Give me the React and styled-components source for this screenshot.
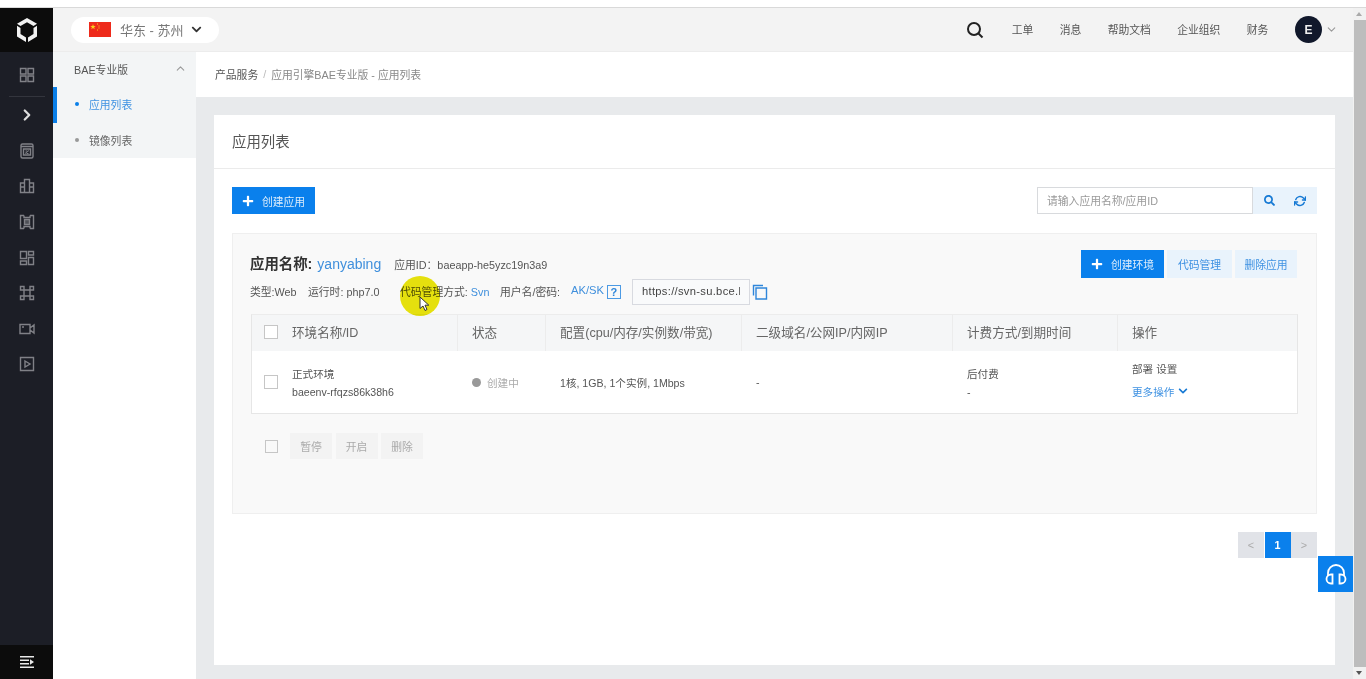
import React from 'react';
import styled, { createGlobalStyle } from 'styled-components';
import { FaSearch, FaPlus, FaChevronDown } from 'react-icons/fa';
import { FiChevronDown, FiChevronUp, FiChevronRight, FiRefreshCw } from 'react-icons/fi';

const GlobalStyle = createGlobalStyle`
  html, body {
    margin: 0;
    height: 100%;
    overflow: hidden;
    background: #fff;
  }
  body {
    font-family: "Liberation Sans", "Noto Sans CJK SC", Arial, sans-serif;
    font-size: 10.8px;
    color: #555;
  }
  * { box-sizing: border-box; }
`;

const Page = styled.div`
  position: relative;
  width: 1366px;
  height: 679px;
  display: flex;
  flex-direction: column;
  overflow: hidden;
`;
const TopStrip = styled.div`
  height: 8px;
  flex: none;
  background: #fff;
  border-bottom: 1px solid #d9d9d9;
`;
const Shell = styled.div`
  flex: 1;
  display: flex;
  min-height: 0;
`;

/* left icon rail */
const Rail = styled.aside`
  width: 53px;
  flex: none;
  background: #1c1e26;
  display: flex;
  flex-direction: column;
  align-items: center;
`;
const RailLogo = styled.div`
  width: 100%;
  height: 44px;
  flex: none;
  background: #0c0c0c;
  display: flex;
  align-items: center;
  justify-content: center;
`;
const RailItem = styled.div`
  width: 100%;
  height: ${(p) => p.$h || 36}px;
  flex: none;
  display: flex;
  align-items: center;
  justify-content: center;
  color: ${(p) => p.$color || '#808187'};
`;
const RailDivider = styled.div`
  width: 36px;
  height: 1px;
  flex: none;
  margin-top: 3px;
  background: #33353d;
`;
const RailTop = styled.div`
  width: 100%;
  padding-top: 5px;
`;
const RailFooter = styled.div`
  margin-top: auto;
  width: 100%;
  height: 34px;
  flex: none;
  background: #0c0c0c;
  display: flex;
  align-items: center;
  justify-content: center;
`;

const Content = styled.div`
  flex: 1;
  min-width: 0;
  display: flex;
  flex-direction: column;
`;

/* top bar */
const TopBar = styled.header`
  height: 44px;
  flex: none;
  background: #f3f3f3;
  border-bottom: 1px solid #ececec;
  display: flex;
  align-items: center;
  padding: 0 0 0 18px;
`;
const Region = styled.div`
  width: 148px;
  height: 26px;
  border-radius: 13px;
  background: #fff;
  display: flex;
  align-items: center;
  padding: 0 0 1px 18px;
  font-size: 13px;
  color: #777;
  svg.flag { margin-right: 9px; }
  svg.arrow { margin-left: 7px; color: #333; }
`;
const TopSearch = styled.div`
  margin-left: auto;
  margin-right: 28px;
  display: flex;
  color: #222;
`;
const TopLink = styled.span`
  margin-right: ${(p) => p.$gap}px;
  padding-bottom: 2px;
  color: #555;
`;
const Avatar = styled.div`
  width: 27px;
  height: 27px;
  border-radius: 50%;
  background: #11182b;
  color: #eee;
  font-size: 12px;
  font-weight: 700;
  display: flex;
  align-items: center;
  justify-content: center;
`;
const AvatarArrow = styled.div`
  display: flex;
  margin: 0 15px 0 3px;
  color: #999;
`;

const Below = styled.div`
  flex: 1;
  display: flex;
  min-height: 0;
`;

/* secondary nav */
const SubNav = styled.nav`
  width: 143px;
  flex: none;
  background: #fff;
`;
const SubNavBlock = styled.div`
  background: #f3f5f6;
  height: 106px;
`;
const SubNavHead = styled.div`
  height: 35px;
  display: flex;
  align-items: center;
  justify-content: space-between;
  padding: 0 9px 2px 21px;
  color: #555;
  svg { color: #999; }
`;
const SubNavItem = styled.div`
  height: 36px;
  display: flex;
  align-items: center;
  padding-left: ${(p) => (p.$active ? 18 : 22)}px;
  padding-bottom: 2px;
  border-left: ${(p) => (p.$active ? '4px solid #0a7fe8' : 'none')};
  color: ${(p) => (p.$active ? '#3f92e2' : '#666')};
`;
const Dot = styled.span`
  width: 4px;
  height: 4px;
  border-radius: 50%;
  margin-right: 10px;
  background: ${(p) => (p.$active ? '#0a7fe8' : '#999')};
`;

/* main area */
const Main = styled.main`
  position: relative;
  flex: 1;
  min-width: 0;
  background: #e8eaec;
  display: flex;
  flex-direction: column;
`;
const Breadcrumb = styled.div`
  height: 45px;
  flex: none;
  background: #fff;
  display: flex;
  align-items: center;
  padding: 0 0 2px 19px;
  color: #888;
  b { font-weight: 400; color: #555; }
  i { font-style: normal; margin: 0 5px; color: #bbb; }
`;
const Card = styled.section`
  flex: 1;
  margin: 18px 18px 14px;
  background: #fff;
  padding: 0 18px;
`;
const CardTitle = styled.h2`
  margin: 0 -18px;
  height: 54px;
  padding: 0 0 2px 18px;
  display: flex;
  align-items: center;
  border-bottom: 1px solid #ebebeb;
  font-size: 14.4px;
  font-weight: 400;
  color: #555;
`;
const Toolbar = styled.div`
  margin-top: 18px;
  display: flex;
  justify-content: space-between;
`;
const PrimaryButton = styled.button`
  width: 83px;
  height: ${(p) => p.$h || 27}px;
  padding: 0;
  border: none;
  background: #0a80ec;
  color: #dcecfb;
  font-family: inherit;
  font-size: 10.8px;
  display: flex;
  align-items: center;
  justify-content: center;
  gap: 8px;
  svg { color: #fff; }
`;
const SearchGroup = styled.div`
  display: flex;
  height: 27px;
`;
const SearchInput = styled.div`
  width: 216px;
  border: 1px solid #d8dadd;
  padding: 0 0 2px 9px;
  display: flex;
  align-items: center;
  color: #999;
`;
const SearchActions = styled.div`
  width: 64px;
  background: #e9f3fc;
  color: #1679d4;
  display: flex;
  align-items: center;
  justify-content: space-around;
  padding: 0 2px;
`;

/* app panel */
const Panel = styled.div`
  margin-top: 19px;
  height: 281px;
  background: #f9f9f9;
  border: 1px solid #efefef;
  padding: 16px 17px;
`;
const PanelHead = styled.div`
  height: 28px;
  display: flex;
  align-items: center;
  justify-content: space-between;
`;
const NameLine = styled.div`
  display: flex;
  align-items: baseline;
  padding-bottom: 3px;
  strong { font-size: 14.4px; color: #333; }
`;
const AppName = styled.span`
  margin: 0 13px 0 5px;
  font-size: 14px;
  color: #3f8fdc;
`;
const HeadActions = styled.div`
  display: flex;
  gap: 3px;
  margin-right: 2px;
`;
const SoftButton = styled.button`
  width: ${(p) => p.$w}px;
  height: 28px;
  padding: 0 0 1px;
  border: none;
  background: #e9f3fc;
  color: #3f92e2;
  font-family: inherit;
  font-size: 10.8px;
`;
const InfoRow = styled.div`
  height: 26px;
  margin-top: 1px;
  display: flex;
  align-items: center;
`;
const Meta = styled.span`
  width: ${(p) => p.$w}px;
  flex: none;
  white-space: nowrap;
  padding-bottom: 3px;
  a { color: #3f8fdc; }
`;
const AkLink = styled.span`
  font-size: 11.2px;
  color: #3f8fdc;
  margin: -4px 3px 0 0;
`;
const HelpBox = styled.span`
  width: 14px;
  height: 14px;
  margin-right: 11px;
  border: 1px solid #4c9ae4;
  color: #2f86da;
  font-size: 11px;
  font-weight: 700;
  display: flex;
  align-items: center;
  justify-content: center;
`;
const UrlBox = styled.div`
  width: 118px;
  height: 26px;
  padding: 0 9px;
  background: #f9fafb;
  border: 1px solid #d8dae0;
`;
const UrlText = styled.div`
  color: #444;
  font-size: 11.2px;
  letter-spacing: 0.3px;
  line-height: 23px;
  overflow: hidden;
  white-space: nowrap;
`;
const CopyIcon = styled.span`
  display: flex;
  margin-left: 2px;
  color: #2f86da;
`;

/* table */
const Table = styled.div`
  margin: 9px 1px 0;
  border: 1px solid #e6e6e6;
  border-top-color: #ececec;
`;
const TableRow = styled.div`
  display: grid;
  grid-template-columns: 206px 88px 196px 211px 165px 179px;
  height: ${(p) => p.$h}px;
  background: ${(p) => p.$bg};
`;
const HeadCell = styled.div`
  display: flex;
  align-items: center;
  padding: 0 0 3px ${(p) => (p.$first ? 12 : 14)}px;
  border-right: ${(p) => (p.$last ? 'none' : '1px solid #ececec')};
  font-size: 12.6px;
  color: #666;
`;
const Cell = styled.div`
  display: flex;
  align-items: center;
  padding-left: ${(p) => (p.$first ? 12 : 14)}px;
  font-size: 10.6px;
  color: #555;
`;
const StackCell = styled.div`
  display: flex;
  flex-direction: column;
  align-items: flex-start;
  justify-content: center;
  gap: ${(p) => p.$gap}px;
  padding: 0 0 ${(p) => p.$lift || 0}px ${(p) => p.$pad}px;
  font-size: 10.6px;
  color: #555;
`;
const Check = styled.span`
  width: 14px;
  height: 14px;
  flex: none;
  margin-right: 14px;
  background: #fff;
  border: 1px solid #c6c6c6;
`;
const Status = styled.span`
  display: flex;
  align-items: center;
  gap: 6px;
  color: #aaa;
  &::before {
    content: '';
    width: 9px;
    height: 9px;
    border-radius: 50%;
    background: #999;
  }
`;
const MoreLink = styled.span`
  display: flex;
  align-items: center;
  gap: 4px;
  color: #3f92e2;
  svg { color: #1679d4; }
`;
const Bulk = styled.div`
  margin-top: 19px;
  display: flex;
  align-items: center;
  padding-left: 15px;
`;
const BulkCheck = styled(Check)`
  width: 13px;
  height: 13px;
  margin-right: 12px;
  background: none;
`;
const BulkButton = styled.span`
  width: 42px;
  height: 26px;
  margin-right: 3.5px;
  background: #f3f3f3;
  color: #aaa;
  display: flex;
  align-items: center;
  justify-content: center;
`;

/* pagination */
const Pager = styled.div`
  margin-top: 18px;
  display: flex;
  justify-content: flex-end;
`;
const PageCell = styled.span`
  width: 26px;
  height: 26px;
  margin-left: ${(p) => (p.$first ? 0 : 0.5)}px;
  display: flex;
  align-items: center;
  justify-content: center;
  background: ${(p) => (p.$active ? '#0a80ec' : '#e1e3e8')};
  color: ${(p) => (p.$active ? '#fff' : '#aaa')};
  font-weight: ${(p) => (p.$active ? 700 : 400)};
`;
const HelpFloat = styled.div`
  position: absolute;
  right: 0;
  top: 504px;
  width: 35px;
  height: 36px;
  background: #0a80ec;
  display: flex;
  align-items: center;
  justify-content: center;
`;

/* scrollbar */
const ScrollBar = styled.div`
  width: 13px;
  flex: none;
  position: relative;
  background: #f1f1f1;
`;
const ScrollArrow = styled.span`
  position: absolute;
  left: 3px;
  ${(p) => (p.$up ? 'top: 4px;' : 'bottom: 4px;')}
  border-left: 3.5px solid transparent;
  border-right: 3.5px solid transparent;
  ${(p) => (p.$up ? 'border-bottom: 4px solid #aaa;' : 'border-top: 4px solid #555;')}
`;
const ScrollThumb = styled.div`
  position: absolute;
  left: 1px;
  right: 0;
  top: 12px;
  bottom: 12px;
  background: #bdbdbd;
`;

/* recorded mouse pointer */
const PointerHalo = styled.div`
  position: absolute;
  left: 400px;
  top: 276px;
  width: 40px;
  height: 40px;
  border-radius: 50%;
  background: #ebe60e;
  mix-blend-mode: multiply;
`;
const Pointer = styled.svg`
  position: absolute;
  left: 419px;
  top: 296px;
`;

const Stroke = ({ children, size = 18 }) => (
  <svg width={size} height={size} viewBox="0 0 18 18" fill="none" stroke="currentColor" strokeWidth="1.4">
    {children}
  </svg>
);

const railIcons = [
  <Stroke key="store">
    <path d="M3 3.5A1.500 1.500 0 0 1 4.500 2h9A1.500 1.500 0 0 1 15 3.500v11a1.500 1.500 0 0 1-1.500 1.500h-9A1.500 1.500 0 0 1 3 14.500z" />
    <path d="M3 4.500h12M5.500 7h7v6h-7z" />
    <path d="M7 11.500l4-3M7.500 9h2M8.500 11.500h2" strokeWidth="1" />
  </Stroke>,
  <Stroke key="building">
    <path d="M6.500 15.500V2.500h5v13M6.500 6H2.500v9.500h13V6h-4M2.500 10h4M11.500 10h4" />
  </Stroke>,
  <Stroke key="bracket">
    <path d="M6 2.500H2.500v13H6M12 2.500h3.500v13H12M6 2.500v2h6v-2M6 15.500v-2h6v2" />
    <path d="M6.500 6.500h5v5h-5z" fill="currentColor" fillOpacity=".5" />
  </Stroke>,
  <Stroke key="layout">
    <path d="M2.500 2.500h6v7h-6zM2.500 12h6v3.500h-6zM10.500 2.500h5V6h-5zM10.500 8.500h5v7h-5z" />
  </Stroke>,
  <Stroke key="nodes">
    <path d="M6 6h6v6H6zM2.500 2.500H6V6H2.500zM12 2.500h3.500V6H12zM2.500 12H6v3.500H2.500zM12 12h3.500v3.500H12z" />
  </Stroke>,
  <Stroke key="video">
    <path d="M2 4.500h10v9H2zM12 8l4-3v8l-4-3" />
    <path d="M4 7h2" strokeWidth="1.600" />
  </Stroke>,
  <Stroke key="play">
    <path d="M2.500 2.500h13v13h-13zM7 6l5 3-5 3z" />
  </Stroke>,
];

const Flag = () => (
  <svg className="flag" width="22" height="15" viewBox="0 0 22 15">
    <rect width="22" height="15" fill="#ee2a1b" />
    <path d="M4 2l.7 2h2l-1.600 1.200.6 2L4 6l-1.700 1.200.6-2L1.300 4h2z" fill="#f7d21d" />
    <path d="M8 1.500h1v1H8zM9.500 3.500h1v1h-1zM9.500 5.500h1v1h-1zM8 7.500h1v1H8z" fill="#f7d21d" />
  </svg>
);

const columns = ['状态', '配置(cpu/内存/实例数/带宽)', '二级域名/公网IP/内网IP', '计费方式/到期时间'];

const App = () => (
  <Page>
    <GlobalStyle />
    <TopStrip />
    <Shell>
      <Rail>
        <RailLogo>
          <svg width="20" height="24" viewBox="0 0 20 24" fill="#f2f2f2">
            <path d="M10 0l10 5.800-3.500 2.200L10 4.200 3.500 8 0 5.800z" />
            <path d="M0 7.800l3.500 2.200v6L9 19.500V24L0 18.500z" />
            <path d="M20 7.800L16.500 10v6L11 19.500V24l9-5.500z" />
          </svg>
        </RailLogo>
        <RailTop>
          <RailItem>
            <Stroke>
              <path d="M2.500 2.500h5.500V8H2.500zM10 2.500h5.500V8H10zM2.500 10H8v5.500H2.500zM10 10h5.500v5.500H10z" />
            </Stroke>
          </RailItem>
        </RailTop>
        <RailDivider />
        <RailItem $color="#ddd">
          <FiChevronRight size={18} strokeWidth={3} />
        </RailItem>
        {railIcons.map((icon) => (
          <RailItem key={icon.key} $h={35.6}>{icon}</RailItem>
        ))}
        <RailFooter>
          <svg width="14" height="12" viewBox="0 0 14 12" fill="#e8e8e8">
            <path d="M0 0h14v1.500H0zM0 3.500h9V5H0zM0 7h9v1.500H0zM0 10.500h14V12H0zM10 3.300l4 2.700-4 2.700z" />
          </svg>
        </RailFooter>
      </Rail>
      <Content>
        <TopBar>
          <Region>
            <Flag />
            华东 - 苏州
            <FaChevronDown className="arrow" size={11} />
          </Region>
          <TopSearch>
            <svg width="18" height="18" viewBox="0 0 18 18" fill="none" stroke="currentColor" strokeWidth="2">
              <circle cx="8" cy="8" r="6" />
              <path d="M12.500 12.500L16.500 16.500" />
            </svg>
          </TopSearch>
          <TopLink $gap={26.4}>工单</TopLink>
          <TopLink $gap={26.4}>消息</TopLink>
          <TopLink $gap={26.4}>帮助文档</TopLink>
          <TopLink $gap={26.4}>企业组织</TopLink>
          <TopLink $gap={26.6}>财务</TopLink>
          <Avatar>E</Avatar>
          <AvatarArrow><FiChevronDown size={13} /></AvatarArrow>
        </TopBar>
        <Below>
          <SubNav>
            <SubNavBlock>
              <SubNavHead>
                BAE专业版
                <FiChevronUp size={13} />
              </SubNavHead>
              <SubNavItem $active><Dot $active />应用列表</SubNavItem>
              <SubNavItem><Dot />镜像列表</SubNavItem>
            </SubNavBlock>
          </SubNav>
          <Main>
            <Breadcrumb>
              <b>产品服务</b><i>/</i>应用引擎BAE专业版 - 应用列表
            </Breadcrumb>
            <Card>
              <CardTitle>应用列表</CardTitle>
              <Toolbar>
                <PrimaryButton><FaPlus size={12} />创建应用</PrimaryButton>
                <SearchGroup>
                  <SearchInput>请输入应用名称/应用ID</SearchInput>
                  <SearchActions>
                    <FaSearch size={11} />
                    <FiRefreshCw size={12} strokeWidth={3} />
                  </SearchActions>
                </SearchGroup>
              </Toolbar>
              <Panel>
                <PanelHead>
                  <NameLine>
                    <strong>应用名称:</strong>
                    <AppName>yanyabing</AppName>
                    应用ID：baeapp-he5yzc19n3a9
                  </NameLine>
                  <HeadActions>
                    <PrimaryButton $h={28}><FaPlus size={12} />创建环境</PrimaryButton>
                    <SoftButton $w={65}>代码管理</SoftButton>
                    <SoftButton $w={62}>删除应用</SoftButton>
                  </HeadActions>
                </PanelHead>
                <InfoRow>
                  <Meta $w={58}>类型:Web</Meta>
                  <Meta $w={92}>运行时: php7.0</Meta>
                  <Meta $w={100}>代码管理方式: <a>Svn</a></Meta>
                  <Meta $w={71}>用户名/密码:</Meta>
                  <AkLink>AK/SK</AkLink>
                  <HelpBox>?</HelpBox>
                  <UrlBox><UrlText>https://svn-su.bce.bj.baidubce.com</UrlText></UrlBox>
                  <CopyIcon>
                    <svg width="16" height="16" viewBox="0 0 16 16" fill="none" stroke="currentColor" strokeWidth="1.400">
                      <path d="M1.500 11.500V1.500H11" />
                      <path d="M4 4h10.500v11H4z" />
                    </svg>
                  </CopyIcon>
                </InfoRow>
                <Table>
                  <TableRow $h={36} $bg="#f5f6f7">
                    <HeadCell $first><Check />环境名称/ID</HeadCell>
                    {columns.map((c) => <HeadCell key={c}>{c}</HeadCell>)}
                    <HeadCell $last>操作</HeadCell>
                  </TableRow>
                  <TableRow $h={62} $bg="#fff">
                    <Cell $first>
                      <Check />
                      <StackCell $gap={5} $pad={0}>
                        <span>正式环境</span>
                        <span>baeenv-rfqzs86k38h6</span>
                      </StackCell>
                    </Cell>
                    <Cell><Status>创建中</Status></Cell>
                    <Cell>1核, 1GB, 1个实例, 1Mbps</Cell>
                    <Cell>-</Cell>
                    <StackCell $gap={5} $pad={14}><span>后付费</span><span>-</span></StackCell>
                    <StackCell $gap={8} $pad={14} $lift={5}>
                      <span>部署 设置</span>
                      <MoreLink>更多操作<FaChevronDown size={10} /></MoreLink>
                    </StackCell>
                  </TableRow>
                </Table>
                <Bulk>
                  <BulkCheck />
                  <BulkButton>暂停</BulkButton>
                  <BulkButton>开启</BulkButton>
                  <BulkButton>删除</BulkButton>
                </Bulk>
              </Panel>
              <Pager>
                <PageCell $first>&lt;</PageCell>
                <PageCell $active>1</PageCell>
                <PageCell>&gt;</PageCell>
              </Pager>
            </Card>
            <HelpFloat>
              <svg width="22" height="21" viewBox="0 0 22 21" fill="none" stroke="#fff" strokeWidth="1.800">
                <path d="M3 12V9a8 8 0 0 1 16 0v3" />
                <path d="M7.500 10.500v9H6a4.500 4.500 0 0 1 0-9zM14.500 10.500v9H16a4.500 4.500 0 0 0 0-9z" />
              </svg>
            </HelpFloat>
          </Main>
        </Below>
      </Content>
      <ScrollBar>
        <ScrollArrow $up />
        <ScrollThumb />
        <ScrollArrow />
      </ScrollBar>
    </Shell>
    <PointerHalo />
    <Pointer width="11" height="16" viewBox="0 0 11 16">
      <path d="M1 1v11.500l3-2.500 2 4.500 2-1-2-4.300h3.800z" fill="#fff" stroke="#333" strokeWidth="1" />
    </Pointer>
  </Page>
);

export default App;
